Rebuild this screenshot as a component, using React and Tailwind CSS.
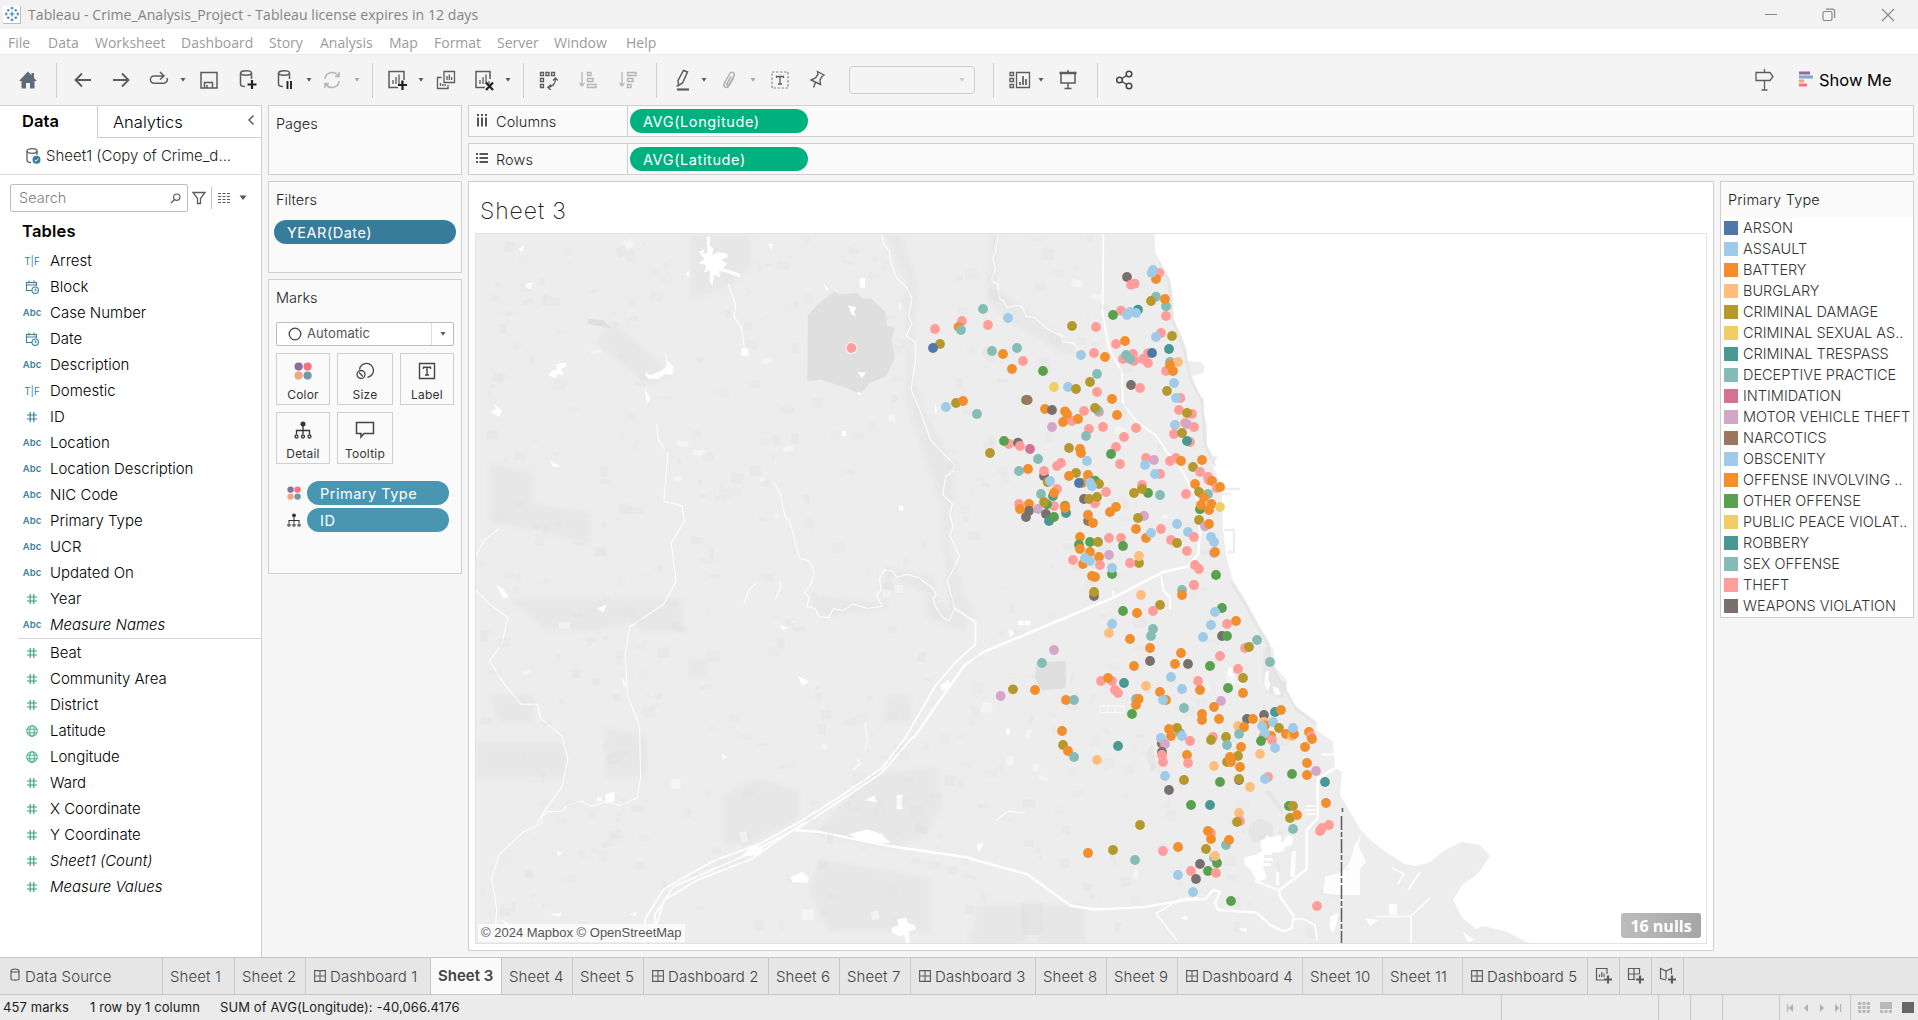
import React from "react";

const PALETTE = {
  a: "#4e79a7", s: "#a0cbe8", b: "#f28e2b", u: "#ffbe7d", d: "#b6992d", c: "#f1ce63", t: "#499894",
  e: "#86bcb6", i: "#d37295", m: "#d4a6c8", n: "#9d7660", o: "#59a14f", h: "#ff9d9a", w: "#79706e",
};

// x,y,category triples, in thirds of a map pixel
const NORTH = `681,111,w 704,131,h 693,134,h 778,99,h 768,117,b 755,98,s 759,90,s 768,170,e 753,183,d 798,199,e 795,177,b 798,228,h
714,209,t 663,212,h 639,225,o 690,216,s 681,225,s 708,219,s 249,207,e 186,243,h 176,261,b 183,270,e 105,267,h 264,255,h 324,234,s 120,312,d 99,324,a
516,258,d 588,261,h 783,279,h 768,291,s 816,288,d 807,327,t 648,312,h 675,303,b 276,333,e 351,324,e 309,342,b 369,363,h 336,387,b 429,393,o
543,345,s 582,339,h 615,351,b 669,357,h 699,342,h 702,363,h 678,345,e 690,357,e 744,340,h 729,357,h 744,369,h 756,339,a 810,366,e 834,366,u 798,393,h 810,375,b 819,393,b
591,402,e 570,426,d 504,441,s 528,447,d 462,441,c 591,456,h 636,477,b 693,435,w 720,444,h 822,429,s 801,453,d 841,474,h 828,474,s
138,501,s 168,489,d 189,483,b 231,522,e 378,480,o 383,480,n 435,507,b 456,510,w 516,543,h 495,514,b 501,522,b 489,546,b 534,537,b 552,513,h 597,516,h 594,511,e 585,504,d 651,525,b
837,510,h 876,522,h 861,519,d 825,555,s 855,549,h 861,552,m 882,561,h 822,582,h 846,579,d 870,606,h 861,603,t
456,561,m 567,567,h 609,561,h 558,588,e 708,564,h 672,591,h 648,621,h 633,642,o 660,672,h
327,612,h 312,603,o 354,608,w 360,618,h 390,627,i 270,639,d 414,657,e 357,693,e 384,687,b 507,624,d 540,627,b 543,639,b 561,663,s
471,678,h 483,669,h 432,708,w 432,693,h 443,726,d 450,723,s 528,699,d 507,708,b 564,705,b 585,722,o 546,729,b 537,729,a 597,732,d 570,728,s 576,739,s
738,654,h 762,660,m 735,675,s 780,702,h 765,702,s 810,663,h 828,654,h 843,663,b 906,660,b 879,681,d
900,696,h 924,711,h 927,721,h 936,723,b 950,744,h 960,741,b 885,732,b 897,756,d 924,762,e 858,762,h 900,808,o 912,772,b 903,795,b 934,792,b 927,810,b 960,801,c
726,735,h 744,759,o 726,747,d 702,759,d 780,765,e 618,756,h 471,747,h 459,768,t 423,762,e 462,759,b 552,777,w 585,790,h 567,777,d 591,771,d
357,792,h 387,792,b 387,812,w 360,807,b 378,831,w 414,807,m 462,798,h 441,793,o 432,786,d 438,822,w 447,843,t 462,831,o 498,819,t 495,797,d 495,804,b
648,801,b 630,816,b 732,828,m 714,834,d 564,843,n 564,825,b 579,849,b 831,852,s 897,840,d 915,859,m 927,852,b 864,876,s 882,891,h
708,867,b 738,894,b 753,879,s 783,867,h 813,900,h 831,909,d 861,933,h 933,891,s 942,906,s 942,939,m 945,936,b
540,891,b 537,914,o 540,927,b 570,906,o 594,906,d 627,894,h 663,894,h 669,918,o 570,936,b 597,951,b 627,945,m 519,960,h 549,972,b 555,954,s 570,963,s 600,975,h
717,969,d 717,948,u 690,969,h 636,1002,o 636,984,s 576,1008,b 585,1011,b 582,1068,w 582,1056,d 885,975,h 897,987,h 948,1005,o 882,1035,h 846,1050,e 846,1065,b 723,1065,u`;

const SOUTH = `420,75,d 522,15,h 309,93,o 351,99,b 399,93,h 276,132,s 267,159,u 330,177,b 399,147,e 393,168,e 606,84,o 585,96,s 573,135,s 621,132,h 648,123,b
549,171,s 606,168,w 621,168,o 711,180,e 675,204,h 687,201,d 750,246,e 102,210,m 66,249,e 390,204,b 390,243,w 342,258,b 483,219,b 465,252,b 504,252,w
570,258,o 600,228,h 654,267,h 669,294,d 453,291,s 243,303,h 276,303,h 264,294,b 312,309,t 285,330,h 294,339,h 378,318,u 420,336,b 438,360,b 429,360,s 486,327,s
534,303,h 540,330,b 624,324,o 669,339,b 603,363,m 582,381,b 492,384,e 348,357,e 356,357,b 348,375,b 336,402,o 45,330,b 138,360,b 162,360,e
546,402,b 546,420,b 597,417,b 765,396,t 783,390,b 732,405,w 681,417,w 699,417,b 732,426,u 735,436,b 759,426,s 726,438,s 732,468,b 753,468,b 735,459,s
654,438,u 672,441,b 657,462,e 723,483,o 756,480,h 777,444,d 798,462,b 816,468,u 822,462,b 819,444,s 765,504,s 867,456,b 873,468,h 876,477,b 855,501,b
480,459,e 471,444,d 447,447,b 453,468,b 486,468,s 510,483,h 579,471,h 573,480,d 618,471,d 621,495,e 663,501,b 720,522,u
425,490,n 423,474,s 435,492,m 426,516,w 426,525,h 429,546,h 501,525,b 504,549,h 126,453,b 129,495,d 144,513,b 162,531,e 231,540,u 294,498,t
582,558,u 621,546,d 654,528,d 630,531,b 633,546,b 660,561,b 657,600,w 657,597,d 744,591,h 735,597,s 690,621,u 600,606,o
435,588,s 447,630,w 492,600,d 861,549,b 888,573,m 861,585,b 816,582,o 915,606,t 918,669,b 513,675,o 570,675,t
360,735,d 657,699,u 660,723,h 651,726,d 807,678,o 819,678,d 810,714,d 831,705,b 819,747,e 927,735,h 906,744,h 900,753,h
573,759,h 564,753,b 573,777,b 618,795,e 627,780,b 279,810,d 204,819,b 345,840,e 429,813,h 474,801,b 558,807,d 582,833,e 591,849,o 585,828,u
540,852,w 513,873,h 564,873,o 588,879,h 528,897,w 474,885,s 519,936,s 633,963,o 891,978,h -21,328,d -58,348,m`;

const parse = (src) => src.trim().split(/\s+/).map((p) => {
  const [x, y, c] = p.split(",");
  return [Number(x) / 3, Number(y) / 3, PALETTE[c]];
});

const MARKS = [
  ...parse(NORTH).map(([x, y, c]) => [x + 900, y + 240, c]),
  ...parse(SOUTH).map(([x, y, c]) => [x + 1020, y + 580, c]),
];

// deterministic scatter of faint land-use parcels
const PARCELS = (() => {
  let seed = 7;
  const rnd = () => ((seed = (seed * 16807) % 2147483647) / 2147483647);
  const out = [];
  for (let k = 0; k < 520; k++) {
    const y = 236 + rnd() * 700;
    const xmax = 1140 + Math.max(0, y - 400) * 0.45;
    out.push([478 + rnd() * (xmax - 478), y, 3 + rnd() * 10, 3 + rnd() * 8, (rnd() - 0.5) * 30, rnd()]);
  }
  return out;
})();

function BaseMap() {
  return (
    <svg viewBox="476 234 1230 709" className="block h-[709px] w-[1230px]" fill="none">
      <defs>
        <filter id="soft" x="-20%" y="-20%" width="140%" height="140%"><feGaussianBlur stdDeviation="5" /></filter>
      </defs>
      <rect x="475" y="233" width="1232" height="711" fill="#fff" />
      <path fill="#ededed" d="M475 233H1155V252L1160 262 1170 280 1173 295 1174 320 1180 332 1187 350 1187 361 1200 362 1205 366 1203 373 1192 376 1198 392 1204 400 1203 410 1207 425 1207 445 1212 455 1218 457 1212 465 1219 480 1222 487 1222 500 1223 530 1226 555 1233 580 1247 603 1260 627 1270 643 1272 663 1280 680 1287 682 1287 693 1297 707 1317 722 1317 730 1333 742 1335 768 1342 772 1340 795 1348 808 1360 829 1368 838 1387 853 1405 864 1416 866 1430 862 1445 850 1462 842 1480 845 1490 856 1478 874 1462 885 1453 900 1462 917 1476 929 1482 926 1505 931 1531 944H475Z" />
      <path stroke="#e2e2e2" strokeWidth="2.500" opacity=".8" d="M1159 262 1169 281 1172 320 1178 334 1185 352 1190 378 1202 402 1205 445 1215 466M1231 582 1245 604 1258 628 1268 645 1271 664 1296 709 1315 723" />
      <g transform="translate(470 230) scale(.4847 .456)">
        <g fill="#dadada" opacity=".3" filter="url(#soft)">
          <path d="M455 10H580V80L540 120 455 155Z" />
          <path d="M40 510 130 530V600L250 620V690L150 660 40 640Z" />
          <path d="M80 810H440V880H350L340 860 260 880 160 880Z" />
          <path d="M15 1125H200V1200H15Z" /><path d="M280 1090 365 1110V1200H280Z" />
          <path d="M520 1240 590 1200 680 1230V1290L590 1340 520 1350Z" />
          <path d="M830 1190 960 1180 975 1260 940 1330 860 1355 710 1320Z" />
          <path d="M720 1380 950 1420V1540H740L700 1450Z" />
          <path d="M860 1020H910V1080H850Z" /><path d="M700 800 850 820 860 740 960 760V800L1000 850 1040 830 1020 880 940 850V800L870 760 860 830 720 850Z" />
          <path d="M860 10H890L925 120 910 300 940 400 1000 520 990 700 1040 850 990 850 970 600 900 380 900 120Z" />
          <path d="M1075 10H1090L1080 120 1140 170 1260 270 1220 270 1100 190 1065 150Z" />
          <path d="M1045 1480H1150V1568H1030Z" /><path d="M1180 1480H1270V1568H1170Z" />
          <path d="M40 1020H130V1080H60Z" /><path d="M450 940H490V980H450Z" />
          <path d="M290 200 360 260 420 320 370 340 260 250Z" />
        </g>
        <path fill="#dfdfdf" d="M697 188 720 160 752 135 760 141 800 138 810 150 828 150 857 180 860 210 877 215 870 240 876 280 858 322 825 335 805 360 780 348 725 328 696 332Z" />
        <path fill="#dfdfdf" d="M1168 948 1229 945V1005L1180 1010 1166 985Z" />
        <path fill="#dfdfdf" d="M243 195 275 198 292 216 243 206Z" />
        <g fill="#fff">
          <path d="M472 48 484 42 480 52 490 50 488 14 496 14 494 34 502 40 500 55 512 48 530 52 532 60 518 66 530 74 522 84 558 96 556 104 528 92 514 90 516 104 504 98 500 122 494 112 496 88 482 94 488 78 472 72 484 64Z" />
          <path d="M780 165 797 170 792 180 797 188 788 186ZM800 312 818 312 808 325ZM798 355 808 357 803 363ZM804 106 815 106V126H804Z" />
          <path d="M162 318 170 308 180 306 178 294 198 291 200 300 188 304 192 318 180 316 176 326ZM358 315 372 318 382 314 402 306 408 288 420 300 418 318 402 316 390 326 368 326Z" />
          <path d="M113 118 130 115 126 130 116 127ZM100 42 112 32 108 48ZM616 30 624 32 622 45ZM42 398 54 392 50 382 66 396 60 410 50 404ZM165 505 185 518 172 520Z" />
          <path d="M560 260H574V275H560ZM55 778 70 790 80 806 68 808ZM262 830 283 820 275 838ZM677 978 699 990 685 1000ZM640 865 655 872 645 877ZM312 980 322 995 318 1003Z" />
          <path d="M279 1237 298 1232V1252L280 1257ZM262 1245H272V1252H262Z" />
          <path d="M782 1325 820 1314 850 1325 868 1345 810 1342ZM880 1240 892 1238V1270H880ZM815 1250 835 1240 838 1255Z" />
          <path d="M870 1530 884 1524 880 1512 900 1508 904 1520 918 1524 920 1534 905 1538 908 1568H902L896 1546 884 1548 870 1540ZM660 1420 685 1408 700 1420 695 1432 665 1430ZM1045 1350 1060 1342 1050 1365Z" />
          <path d="M1131 857H1142V867H1131ZM1145 857H1156V867H1145ZM1112 875 1124 882 1114 892ZM1106 1093H1114V1106H1106ZM767 441H776V451H767ZM885 605H894V615H885Z" />
          <path d="M520 1150 530 1155 522 1162ZM180 1362 190 1365 182 1372ZM165 1500 190 1498 185 1505ZM60 1510 85 1525 90 1540ZM970 1000 988 985 990 1000 975 1012ZM580 1350 605 1352 600 1370 560 1375Z" />
          <path d="M360 345 372 370 365 380ZM445 95 452 90V105ZM730 118 740 130 735 134ZM885 160 890 162 888 180ZM330 1500 345 1495 342 1505ZM960 380 964 400 958 400Z" />
        </g>
        <g stroke="#fff" strokeWidth="1.100" strokeLinejoin="round" opacity=".9">
          <path vectorEffect="non-scaling-stroke" d="M850 10 852 30 865 45 868 70 880 105 900 125 912 150 905 190 912 205 900 232 918 245 920 280 910 350 930 400 950 460 985 500 1000 515 996 530 982 540 975 580 995 600 990 625 997 650 990 670 1010 715 985 770 1000 830 988 858 975 850 960 825 955 808 962 800 955 785 925 762 900 755 880 762 872 748 855 745 845 765 848 790 838 800 850 825 820 830 790 820 770 835 750 830 740 850 720 848 712 830 695 825 700 805 690 795 705 775 710 750 700 725 680 720 660 640 650 628 640 580 628 555" />
          <path vectorEffect="non-scaling-stroke" d="M1090 10 1084 50 1078 62 1084 85 1076 110 1090 120 1092 150 1100 155 1108 170 1130 165 1140 170 1148 190 1165 192 1185 212 1205 225 1222 232 1220 245 1245 248 1260 270" />
          <path vectorEffect="non-scaling-stroke" d="M533 118 548 165 545 190 560 215 567 265M404 270 408 300 375 325 362 310" />
          <path vectorEffect="non-scaling-stroke" d="M385 425 388 460 408 490 400 595 438 605 442 640 415 685 425 770 400 820 330 870 320 930 325 1020 350 1090 352 1200 345 1245 330 1252 310 1262 280 1254 250 1264 230 1252 200 1262 190 1274 160 1276 145 1290 150 1300 110 1320 60 1370 45 1420 55 1490 50 1568" />
          <path vectorEffect="non-scaling-stroke" d="M12 715 30 680 60 655M12 790 40 820 78 850 65 910 40 945 70 995 105 1040 140 1040 145 1070 190 1110 202 1160 190 1220 150 1280 140 1300" />
          <path vectorEffect="non-scaling-stroke" d="M565 820 575 790 590 775M630 810 640 785 640 770M815 1080 820 1120 815 1140M1085 1295 1110 1275 1145 1278M800 1160 805 1170 790 1185" />
        </g>
        <g stroke="#fff" strokeWidth="1.700" strokeLinejoin="round">
          <path vectorEffect="non-scaling-stroke" d="M358 1568 362 1510 400 1445 500 1385 600 1345 680 1298 760 1245 850 1180 900 1110 960 1000 1000 950 1043 908V860L1000 830" />
          <path vectorEffect="non-scaling-stroke" d="M378 1568 382 1500 420 1440 560 1375 680 1310 780 1240 850 1190 915 1110M372 1568 400 1470 470 1425 580 1380 640 1335 690 1300" />
          <path vectorEffect="non-scaling-stroke" d="M915 1115 970 1030 1020 955 1060 925 1330 805 1430 750 1480 738 1502 712 1506 670 1506 620" strokeWidth="2.400" />
          <path vectorEffect="non-scaling-stroke" d="M670 1316 720 1320 860 1350 1020 1375 1150 1413 1200 1452 1240 1482 1290 1490 1390 1485 1500 1465" strokeWidth="2.400" />
          <path vectorEffect="non-scaling-stroke" d="M1307 10 1305 180 1318 260 1345 310 1347 380 1375 420 1415 450 1440 490 1465 520 1505 600" />
          <path vectorEffect="non-scaling-stroke" d="M1426 757 1430 790 1444 808V830M1327 805V790" strokeWidth="1.400" />
        </g>
      </g>
      <g>
        {PARCELS.map(([x, y, w, h, r, t], k) => (
          <rect key={k} x={x} y={y} width={w} height={h} fill={t > 0.94 ? "#f6f6f6" : "#dcdcdc"} opacity={t > 0.94 ? 0.7 : 0.12 + t * 0.18} transform={`rotate(${r} ${x} ${y})`} />
        ))}
      </g>
      <g transform="translate(1020 580) scale(.3333)">
        <g fill="#dfdfdf" opacity=".5">
          <path d="M690 730 720 715 760 735V770L700 790 685 760ZM735 635 750 632 792 690 788 705ZM5 970H70V1065H5Z" />
          <path d="M380 520 395 490 410 560 395 580ZM730 205 760 200 765 260 800 300 790 355 740 340 728 300Z" />
        </g>
        <g fill="#fff">
          <path d="M722 780 735 778 740 765 752 772 782 764 785 790 805 765 820 770 815 795 795 800 790 812 775 818H755V824H732V834H758V842H730V850H752V858H728L740 895 712 908 692 868 674 855 673 832 705 824 728 812 722 800Z" />
          <path d="M815 815 828 812 825 890 810 890ZM768 875H777V915H768ZM735 275 748 272 745 300 752 312 742 335 733 315ZM757 318 775 325 782 342 765 345ZM905 520H945V527H905ZM915 890 1020 860V945H950L910 940Z" opacity=".85" />
          <path d="M620 280 628 262 640 265 636 280 648 286 628 290ZM480 1015 500 1005 502 1020ZM655 1045H680V1058ZM930 1010 955 1000 950 1030 938 1060 930 1040Z" opacity=".9" />
        </g>
        <g stroke="#fff" strokeLinejoin="round" strokeLinecap="round" strokeWidth="7">
          <path d="M480 958H555L580 930 600 935 585 970 595 990 710 998 750 1035 790 1054 815 1045 822 1010 780 950 778 930 860 868V750L893 715V595L945 565" />
          <path d="M705 903 778 932M822 1020 845 1015 885 1035 892 1080" strokeWidth="5" />
          <path d="M480 958 408 1000 470 1080M1020 770 1005 830 960 890M855 690H885M858 702H885M862 678H885" strokeWidth="4" />
          <path d="M240 378H312V398H240ZM262 380V396M285 380V396" strokeWidth="4" opacity=".6" />
        </g>
        <path d="M425 0 430 30 450 50V88" stroke="#fff" strokeWidth="5" />
      </g>
      <g fill="#fff">
        <path d="M1389 904H1397V915H1389ZM1365 918 1378 920 1370 926ZM1462 931 1475 940 1468 942ZM1356 840 1366 862 1350 880 1348 868Z" opacity=".85" />
        <path d="M1376 916.500H1411V944M1411 916 1430 898M1392 868 1404 874 1398 884M1420 872 1408 890" fill="none" stroke="#fff" strokeWidth="1.600" />
      </g>
      <path d="M1342.500 808V812M1341.500 816V943" stroke="#5e5e5e" strokeWidth="1.500" strokeDasharray="14 2 5 2" />
      <path d="M1222 489H1240M1222 494H1231M1224 530H1234V552H1228" stroke="#ededed" strokeWidth="2.500" />
      <circle cx="851.5" cy="348" r="6" fill="#fff" opacity=".8" />
      <circle cx="851.5" cy="348" r="4.900" fill="#ff9d9a" />
      {MARKS.map(([x, y, c], k) => (
        <circle key={k} cx={x} cy={y} r="4.900" fill={c} />
      ))}
    </svg>
  );
}

const Svg = ({ w = 20, h = 20, className = "", children, ...p }) => (
  <svg width={w} height={h} viewBox={`0 0 ${w} ${h}`} fill="none" stroke="#5c5c5c" strokeWidth="1.500" className={`block shrink-0 ${className}`} {...p}>{children}</svg>
);
const Caret = ({ className = "", color = "#5c5c5c" }) => (
  <Svg w={8} h={6} className={className} stroke="none"><path d="M1.500 1H6.500L4 4.800Z" fill={color} /></Svg>
);
const Sep = ({ className }) => <div className={`h-[35px] w-px shrink-0 bg-[#cfcfcf] ${className}`} />;
const Bars = () => <path d="M6 15V11M9 15V8M12 15V5.500M15 15V12" strokeWidth="1.300" />;
const FourDots = ({ s = 18, className = "" }) => (
  <svg width={s} height={s} viewBox="0 0 18 18" className={className}>
    <circle cx="4.600" cy="4.600" r="4.100" fill="#8b6f9b" /><circle cx="13.600" cy="4.600" r="4.100" fill="#f9707f" />
    <circle cx="4.600" cy="13.600" r="4.100" fill="#f3a77c" /><circle cx="13.600" cy="13.600" r="4.100" fill="#6d9aa6" />
  </svg>
);
const DetailIcon = ({ s = 18 }) => (
  <svg width={s} height={s} viewBox="0 0 18 18" fill="none" stroke="#333" strokeWidth="1.300">
    <circle cx="9" cy="3" r="2.500" fill="#333" stroke="none" /><path d="M9 4V13M2.500 13V9.500H15.500V13" />
    <circle cx="2.500" cy="15.500" r="1.500" /><circle cx="9" cy="15.500" r="1.500" /><circle cx="15.500" cy="15.500" r="1.500" />
  </svg>
);

function Toolbar() {
  return (
    <div className="flex h-[51px] shrink-0 items-center border-t border-[#ebebeb] bg-[#f4f4f4] pl-[18px] pr-[28px]">
      <Svg stroke="none"><path d="M10 1.500 1 11H3.500V18.500H8V13H12V18.500H16.500V11H19L16 8V3H13.500V5.200Z" fill="#5f6b7a" /></Svg>
      <Sep className="ml-[18px]" />
      <Svg className="ml-4" strokeWidth="1.800"><path d="M18 10H3M9 3.500 2.500 10 9 16.500" /></Svg>
      <Svg className="ml-[18px]" strokeWidth="1.800"><path d="M2 10H17M11 3.500 17.500 10 11 16.500" /></Svg>
      <Svg className="ml-[18px]"><path d="M15 6H5A3.600 3.600 0 0 0 5 13.200H15A3.600 3.600 0 0 0 18 8M11 2 15 6 11 9.500" /></Svg>
      <Caret className="ml-2.5" />
      <Svg className="ml-3"><path d="M2 2.500H18V18H2ZM5.500 18V12.500H13.500V18M8 15V18" /></Svg>
      <Svg className="ml-[19px]" h={22}><ellipse cx="8" cy="4" rx="5.500" ry="2.200" /><path d="M2.500 4V15C2.500 17 5 17.500 7 17.500M13.500 4V10" /><path d="M14 11V20M9.500 15.500H18.500" strokeWidth="2.200" stroke="#222" /></Svg>
      <Svg className="ml-[18px]" h={22}><ellipse cx="8" cy="4" rx="5.500" ry="2.200" /><path d="M2.500 4V15C2.500 17 5 17.500 7 17.500M13.500 4V10" /><path d="M11.500 12V20M15 12V20" strokeWidth="1.900" stroke="#222" /></Svg>
      <Caret className="ml-[9px]" />
      <Svg className="ml-[9px]" stroke="#b5b5b5"><path d="M3 9A7 7 0 0 1 16 6M17 11A7 7 0 0 1 4 14M17 2V6.500H13M3 18V13.500H7" /></Svg>
      <Caret className="ml-[11px]" color="#aaa" />
      <Sep className="ml-[11px]" />
      <Svg className="ml-3.5" h={22}><path d="M11 18.500H2V2.500H17V11" /><Bars /><path d="M15.500 11.500V21M11 16H20" strokeWidth="2.200" stroke="#222" /></Svg>
      <Caret className="ml-2.5" />
      <Svg className="ml-[11px]"><path d="M8 1.500H18.500V12.500H8ZM5.500 7.500H1.500V18.500H12V15M11 10V6M13.300 10V4.500M15.600 10V7M4.500 16V13M6.800 16V14M9 16V14" strokeWidth="1.300" /></Svg>
      <Svg className="ml-[18px]" h={22}><path d="M11 18.500H2V2.500H16V10" /><Bars /><path d="M12 13.500 19 21M19 13.500 12 21" strokeWidth="2.200" stroke="#222" /></Svg>
      <Caret className="ml-2.5" />
      <Sep className="ml-[11px]" />
      <Svg className="ml-3.5" strokeWidth="1.300"><path d="M2.500 2.500H5.500V5.500H2.500ZM8 2.500H11V5.500H8ZM13.500 2.500H16.500V5.500H13.500ZM2.500 8.500H5.500V11.500H2.500ZM2.500 14.500H5.500V17.500H2.500ZM17.500 8.500C17.500 13.500 15 16.500 10 17.500M15 10.500 17.500 8 20 10.500M13 14.500 9.800 17.500 13 20" /></Svg>
      <Svg className="ml-5" stroke="#b5b5b5"><path d="M4 2V16M1.500 13 4 16 6.500 13M9.500 2.500H13V5.500H9.500ZM9.500 8.500H15V11.500H9.500ZM9.500 14.500H18V17.500H9.500Z" strokeWidth="1.300" /></Svg>
      <Svg className="ml-5" stroke="#b5b5b5"><path d="M4 2V16M1.500 13 4 16 6.500 13M9.500 2.500H18V5.500H9.500ZM9.500 8.500H15V11.500H9.500ZM9.500 14.500H13V17.500H9.500Z" strokeWidth="1.300" /></Svg>
      <Sep className="ml-[18px]" />
      <Svg className="ml-4" h={24}><path d="M10.500 2.500 14.500 4 9.500 15 5.500 17.500 5 12.500Z" /><path d="M4 21.500H16" strokeWidth="2.200" /><path d="M3.500 18H5" /></Svg>
      <Caret className="ml-[7px]" />
      <Svg className="ml-[11px]" stroke="#b0b0b0"><path d="M14.500 8 10 15.500C8 19 3.500 17 5.500 13L10.500 4C12 1 16.500 2.500 15 6L10 14.500C9 16 7 15 8 13.500L12 6.500" /></Svg>
      <Caret className="ml-2.5" color="#aaa" />
      <Svg className="ml-[13px]"><path d="M2 2H18V18H2Z" strokeDasharray="2.500 1.500" stroke="#8a8a8a" strokeWidth="1.200" /><path d="M6.500 8V6.500H13.500V8M10 6.500V14M8 14H12" strokeWidth="1.300" /></Svg>
      <Svg className="ml-[17px]"><path d="M10.500 1.500 17 5 15 6.500 13 10 13.500 14.500 4 10 8.500 8 11 4.500ZM8.500 12.500 6.500 17.500" strokeWidth="1.400" /></Svg>
      <div className="ml-[22px] flex h-7 w-[126px] shrink-0 items-center justify-end rounded-sm border border-[#cfcfcf] pr-2"><Caret color="#ccc" /></div>
      <Sep className="ml-[18px]" />
      <Svg className="ml-[15px]" w={22}><path d="M1 2.500H4.500V5.500H1ZM1 8.500H4.500V11.500H1ZM1 14.500H4.500V17.500H1ZM7.500 2.500H20.500V17.500H7.500Z" strokeWidth="1.300" /><path d="M11 15V12M14 15V6M17 15V9" strokeWidth="1.700" /></Svg>
      <Caret className="ml-1.5" />
      <Svg className="ml-[13px]"><path d="M1.500 3H18.500" strokeWidth="2.500" /><path d="M3 4V13H17V4M10 13V18M6.500 18.500H13.500M10 0V3" /></Svg>
      <Sep className="ml-[19px]" />
      <Svg className="ml-[17px]" stroke="#444"><circle cx="4.500" cy="10" r="2.800" /><circle cx="14" cy="4" r="2.800" /><circle cx="14" cy="16" r="2.800" /><path d="M7 8.500 11.500 5.500M7 11.500 11.500 14.500" /></Svg>
      <Svg className="ml-auto" h={24}><path d="M10.500 1V4M10.500 13V22M7.500 22H13.500M2 4.500H16L19 8.500 16 12.500H2Z" strokeWidth="1.300" /></Svg>
      <Svg className="ml-[24px]" w={16} h={22} stroke="none"><path d="M1 2.500H12V5.500H1Z" fill="#8b6f9b" /><path d="M1 6.500H15V9.500H1Z" fill="#85a3cb" /><path d="M1 10.500H6V13.500H1Z" fill="#f3a77c" /><path d="M1 14.500H9V17.500H1Z" fill="#f9707f" /></Svg>
      <div className="ml-[5px] w-[71px] whitespace-nowrap text-[16.500px] text-black">Show Me</div>
    </div>
  );
}

const HashIcon = ({ green }) => (
  <Svg w={12} h={12} stroke={green ? "#35a37c" : "#3b7f9f"} strokeWidth="1.200"><path d="M4.200 1V11M7.800 1V11M1 4H11M1 8H11" /></Svg>
);
const ICONS = {
  abc: <span className="text-[9.500px] font-semibold text-[#41819f]">Abc</span>,
  tf: <span className="text-[10px] text-[#3b7f9f]">T|F</span>,
  date: <Svg w={14} h={14} stroke="#3b7f9f" strokeWidth="1.100"><path d="M7 10.500H1.500V2.500H11.500V6M1.500 5H11.500M4 .5V3.500M9 .5V3.500" /><circle cx="10.200" cy="10.200" r="3.200" /><path d="M10.200 8.500V10.300H11.800" /></Svg>,
  num: <HashIcon />,
  gnum: <HashIcon green />,
  geo: <Svg w={12} h={12} stroke="#4bb08c" strokeWidth="1.100"><circle cx="6" cy="6" r="5.200" /><ellipse cx="6" cy="6" rx="2.300" ry="5.200" /><path d="M1 4.200H11M1 7.800H11" /></Svg>,
};
const DIMS = [["tf", "Arrest"], ["date", "Block"], ["abc", "Case Number"], ["date", "Date"], ["abc", "Description"], ["tf", "Domestic"], ["num", "ID"], ["abc", "Location"], ["abc", "Location Description"], ["abc", "NIC Code"], ["abc", "Primary Type"], ["abc", "UCR"], ["abc", "Updated On"], ["gnum", "Year"], ["abc", "Measure Names", true]];
const MEAS = [["gnum", "Beat"], ["gnum", "Community Area"], ["gnum", "District"], ["geo", "Latitude"], ["geo", "Longitude"], ["gnum", "Ward"], ["gnum", "X Coordinate"], ["gnum", "Y Coordinate"], ["gnum", "Sheet1 (Count)", true], ["gnum", "Measure Values", true]];

const Field = ({ icon, label, italic }) => (
  <div className="flex h-[26px] items-center">
    <div className="ml-[23px] flex w-[18px] justify-center">{ICONS[icon]}</div>
    <div className={`ml-[9px] whitespace-nowrap text-[15px] font-light text-black ${italic ? "italic" : ""}`}>{label}</div>
  </div>
);

function DataPane() {
  return (
    <div className="flex w-[262px] shrink-0 flex-col border-r border-[#cfcfcf] bg-white">
      <div className="flex h-[33px] shrink-0">
        <div className="w-[97px] border-t border-[#cfcfcf] pl-[22px] text-[16.500px] font-semibold leading-[30px] tracking-[0.1px] text-black">Data</div>
        <div className="flex flex-1 items-center justify-between border border-r-0 border-[#cfcfcf] pl-[15px] pr-[6px] text-[16.500px] text-black">
          <span className="mt-0.5 font-light">Analytics</span>
          <Svg w={8} h={12} className="mb-1"><path d="M6.500 1.500 2 6 6.500 10.500" /></Svg>
        </div>
      </div>
      <div className="flex h-[37px] shrink-0 items-center border-b border-[#dcdcdc] pl-[25px] text-[15px] text-[#222]">
        <Svg w={17} h={18} strokeWidth="1.300"><ellipse cx="7" cy="4" rx="5" ry="2.300" /><path d="M2 4V13C2 15 4 15.500 6 15.500M12 4V8" /><circle cx="11.500" cy="12.800" r="4" fill="#3b7f9f" stroke="none" /><path d="M9.800 13 11 14.200 13.300 11.600" stroke="#fff" strokeWidth="1" /></Svg>
        <span className="ml-1 whitespace-nowrap font-light">Sheet1 (Copy of Crime_d...</span>
      </div>
      <div className="mt-[9px] flex h-7 shrink-0 items-center pl-[10px]">
        <div className="flex h-7 w-[178px] items-center justify-between rounded-[2px] border border-[#bdbdbd] pl-2 pr-[6px] text-[14.500px] font-light text-[#808080]">
          Search
          <Svg w={11} h={11} strokeWidth="1.200"><circle cx="6.800" cy="4.200" r="3.200" /><path d="M4.500 6.500 1 10" /></Svg>
        </div>
        <Svg w={14} h={14} className="ml-[4px]" strokeWidth="1.300"><path d="M1 1.500H13L8.500 7.500V12.500H5.500V7.500Z" /></Svg>
        <div className="ml-[5px] h-[22px] w-px bg-[#c4c4c4]" />
        <Svg w={14} h={12} className="ml-[5px]" strokeWidth="1.200"><path d="M1 1.500H4M5.500 1.500H8.500M10 1.500H13M1 4.500H4M5.500 4.500H8.500M10 4.500H13M1 7.500H4M5.500 7.500H8.500M10 7.500H13M1 10.500H4M5.500 10.500H8.500M10 10.500H13" /></Svg>
        <svg width="8" height="6" viewBox="0 0 8 6" className="ml-2"><path d="M.5.500H7.500L4 5Z" fill="#555" /></svg>
      </div>
      <div className="mt-2 h-[28px] shrink-0 pl-[22px] text-[16.500px] font-semibold leading-[22px] tracking-[0.2px] text-black">Tables</div>
      <div>{DIMS.map(([i, l, it]) => <Field key={l} icon={i} label={l} italic={it} />)}</div>
      <div className="ml-[18px] h-px shrink-0 bg-[#d4d4d4]" />
      <div className="mt-px">{MEAS.map(([i, l, it]) => <Field key={l} icon={i} label={l} italic={it} />)}</div>
    </div>
  );
}

const MarkButton = ({ label, icon, wide }) => (
  <div className={`flex h-[52px] flex-col items-center border border-[#cfcfcf] pt-[8px] ${wide ? "w-[56px]" : "w-[54px]"}`}>
    <div className="flex h-[18px] items-center">{icon}</div>
    <div className="mt-[7px] text-[12px] leading-[16px] tracking-[0.2px] text-[#333]">{label}</div>
  </div>
);
const card = "border border-[#cfcfcf] bg-[#fafafa]";

function Cards() {
  return (
    <div className="ml-[6px] flex w-[194px] shrink-0 flex-col gap-[6px] text-[14.500px] text-[#222]">
      <div className={`${card} h-[70px] pl-[7px] pt-[8px] font-light leading-[20px]`}>Pages</div>
      <div className={`${card} h-[92px] pl-[5px] pt-[8px]`}>
        <div className="pl-[2px] font-light leading-[20px]">Filters</div>
        <div className="mt-[10px] h-6 w-[182px] rounded-full bg-[#387c9b] pl-[13px] leading-[25px] tracking-[0.5px] text-white">YEAR(Date)</div>
      </div>
      <div className={`${card} h-[295px] pl-[7px] pt-[8px]`}>
        <div className="font-light leading-[20px]">Marks</div>
        <div className="mt-[14px] flex h-6 w-[178px] items-center rounded-[2px] border border-[#bdbdbd] bg-white text-[13px] tracking-[0.1px] text-[#555]">
          <Svg w={14} h={14} className="ml-[11px]" stroke="#444" strokeWidth="1.300"><circle cx="7" cy="7" r="5.800" /></Svg>
          <span className="ml-[5px]">Automatic</span>
          <div className="ml-auto flex h-full w-[22px] items-center justify-center border-l border-[#dcdcdc]"><Caret /></div>
        </div>
        <div className="mt-[7px] flex gap-[7px]">
          <MarkButton label="Color" icon={<FourDots />} />
          <MarkButton wide label="Size" icon={<Svg w={18} h={18} stroke="#444" strokeWidth="1.300"><path d="M3.500 7.500A7 7 0 1 1 11.500 15.300" /><circle cx="5" cy="12.500" r="4" /><path d="M3 10.500 7 14.500" /></Svg>} />
          <MarkButton label="Label" icon={<Svg w={18} h={18} stroke="#444"><path d="M1.500 1.500H16.500V16.500H1.500ZM5.500 7V5.200H12.500V7M9 5.200V13M7 13H11" strokeWidth="1.400" /></Svg>} />
        </div>
        <div className="mt-[7px] flex gap-[7px]">
          <MarkButton label="Detail" icon={<DetailIcon />} />
          <MarkButton wide label="Tooltip" icon={<Svg w={20} h={18} stroke="#444"><path d="M1.500 1.500H18.500V12.500H9L6 16V12.500H1.500Z" /></Svg>} />
        </div>
        <div className="mt-[17px] flex items-center pl-[11px] text-white">
          <FourDots s={14} /><div className="ml-[6px] h-6 w-[142px] rounded-full bg-[#4996b2] pl-[13px] leading-[25px] tracking-[0.5px]">Primary Type</div>
        </div>
        <div className="mt-[3px] flex items-center pl-[11px] text-white">
          <DetailIcon s={14} /><div className="ml-[6px] h-6 w-[142px] rounded-full bg-[#4996b2] pl-[13px] leading-[25px] tracking-[0.5px]">ID</div>
        </div>
      </div>
    </div>
  );
}

const Shelf = ({ icon, label, pill }) => (
  <div className={`${card} flex h-8 text-[14.500px] text-[#222]`}>
    <div className="flex w-[159px] items-center border-r border-[#cfcfcf] pl-[7px]">{icon}<span className="ml-2 mt-px font-light tracking-[0.1px]">{label}</span></div>
    <div className="ml-[2px] mt-[3px] h-6 w-[178px] rounded-full bg-[#00b180] pl-[13px] leading-[26px] tracking-[0.6px] text-white">{pill}</div>
  </div>
);

const LEGEND = [["#4e79a7", "ARSON"], ["#a0cbe8", "ASSAULT"], ["#f28e2b", "BATTERY"], ["#ffbe7d", "BURGLARY"], ["#b6992d", "CRIMINAL DAMAGE"], ["#f1ce63", "CRIMINAL SEXUAL AS.."], ["#499894", "CRIMINAL TRESPASS"], ["#86bcb6", "DECEPTIVE PRACTICE"], ["#d37295", "INTIMIDATION"], ["#d4a6c8", "MOTOR VEHICLE THEFT"], ["#9d7660", "NARCOTICS"], ["#a0cbe8", "OBSCENITY"], ["#f28e2b", "OFFENSE INVOLVING .."], ["#59a14f", "OTHER OFFENSE"], ["#f1ce63", "PUBLIC PEACE VIOLAT.."], ["#499894", "ROBBERY"], ["#86bcb6", "SEX OFFENSE"], ["#ff9d9a", "THEFT"], ["#79706e", "WEAPONS VIOLATION"]];

const DashIcon = () => <Svg w={12} h={12} strokeWidth="1.100"><path d="M.6.600H11.400V11.400H.6ZM6 .6V11.400M.6 6H11.400" /></Svg>;
const TABS = [["Sheet 1", "w-[72px]"], ["Sheet 2", "w-[71px]"], ["Dashboard 1", "w-[125px]"], ["Sheet 3", "w-[71px]"], ["Sheet 4", "w-[71px]"], ["Sheet 5", "w-[71px]"], ["Dashboard 2", "w-[125px]"], ["Sheet 6", "w-[71px]"], ["Sheet 7", "w-[71px]"], ["Dashboard 3", "w-[125px]"], ["Sheet 8", "w-[71px]"], ["Sheet 9", "w-[71px]"], ["Dashboard 4", "w-[125px]"], ["Sheet 10", "w-[80px]"], ["Sheet 11", "w-[80px]"], ["Dashboard 5", "w-[125px]"]];
const NEW_TABS = [
  <path key="s" d="M9 13H1.500V1.500H12V7M4.500 10V7.500M6.800 10V5M9 10V6.500" />,
  <path key="d" d="M8 12.500H1.500V1.500H12.500V7M7 1.500V12M1.500 7H12.500" />,
  <path key="b" d="M7 13 1.500 11.500V1.500L7 4 12.500 1.500V7M7 4V12" />,
];

function BottomBars() {
  return (
    <>
      <div className="flex h-[38px] shrink-0 border-y border-[#c6c6c6] bg-[#e6e6e6] text-[15px] text-[#444]">
        <div className="flex w-[163px] items-center border-r border-[#c6c6c6] pl-[10px]">
          <Svg w={10} h={13} className="mb-[3px]" strokeWidth="1.200"><path d="M1 3V11C1 12.500 9 12.500 9 11V3C9 .3 1 .3 1 3C1 4.500 9 4.500 9 3" /></Svg>
          <span className="ml-[5px] mt-[3px] font-light tracking-[0.1px]">Data Source</span>
        </div>
        {TABS.map(([label, w]) => {
          const dash = label.startsWith("Dash");
          const active = label === "Sheet 3";
          return (
            <div key={label} className={`flex shrink-0 items-center whitespace-nowrap border-r border-[#c6c6c6] ${w} ${dash ? "pl-2" : "pl-[7px]"} ${active ? "bg-[#fafafa] font-semibold text-[#444]" : "font-light"}`}>
              {dash && <span className="mr-1"><DashIcon /></span>}
              <span className={active ? "" : "mt-[3px] tracking-[0.1px]"}>{label}</span>
            </div>
          );
        })}
        {NEW_TABS.map((p, k) => (
          <div key={k} className="flex w-8 items-center justify-center border-r border-[#c6c6c6]">
            <Svg w={18} h={18} strokeWidth="1.200">{p}<path d="M13 8.500V16.500M9 12.500H17" strokeWidth="2.200" /></Svg>
          </div>
        ))}
      </div>
      <div className="flex h-[25px] shrink-0 items-center bg-[#ebebeb] pl-[3px] text-[13px] tracking-[0.1px] text-[#222]">
        <span className="w-[87px]">457 marks</span>
        <span className="w-[130px]">1 row by 1 column</span>
        <span>SUM of AVG(Longitude): -40,066.4176</span>
        <div className="ml-auto flex h-full items-center">
          <div className="h-full w-[157px] border-l border-[#c9c9c9]" />
          <div className="h-full w-8 border-l border-[#c9c9c9]" />
          <div className="h-full w-8 border-l border-[#c9c9c9]" />
          <div className="h-full w-[57px] border-l border-[#c9c9c9]" />
          <div className="flex h-full w-[71px] items-center gap-[8px] border-l border-[#c9c9c9] pl-[6px]">
            {["M1 0H2.200V8H1ZM7 0V8L2.500 4Z", "M6 0V8L2 4Z", "M2 0V8L6 4Z", "M6 0H7.200V8H6ZM1 0V8L5.500 4Z"].map((d) => (
              <svg key={d} width="8" height="8" viewBox="0 0 8 8"><path d={d} fill="#b3b3b3" /></svg>
            ))}
          </div>
          <div className="flex h-full w-[68px] items-center gap-[10px] border-l border-[#c9c9c9] pl-[7px]">
            <svg width="12" height="11" viewBox="0 0 12 11"><path d="M0 0H3.200V3H0ZM4.400 0H7.600V3H4.400ZM8.800 0H12V3H8.800ZM0 4H3.200V7H0ZM4.400 4H7.600V7H4.400ZM8.800 4H12V7H8.800ZM0 8H3.200V11H0ZM4.400 8H7.600V11H4.400ZM8.800 8H12V11H8.800Z" fill="#b9b9b9" /></svg>
            <svg width="12" height="11" viewBox="0 0 12 11"><path d="M0 0H12V7H0ZM0 8H3.200V11H0ZM4.400 8H7.600V11H4.400ZM8.800 8H12V11H8.800Z" fill="#b9b9b9" /></svg>
            <div className="h-[11px] w-[12px] bg-[#666]" />
          </div>
        </div>
      </div>
    </>
  );
}

const MENU = [["File", "w-10"], ["Data", "w-[47px]"], ["Worksheet", "w-[86px]"], ["Dashboard", "w-[88px]"], ["Story", "w-[51px]"], ["Analysis", "w-[69px]"], ["Map", "w-[45px]"], ["Format", "w-[63px]"], ["Server", "w-[57px]"], ["Window", "w-[72px]"], ["Help", "w-10"]];

export default function App() {
  return (
    <div className="flex h-[1020px] w-[1918px] flex-col overflow-hidden bg-[#f5f5f5] font-['Inter',sans-serif]">
      <div className="flex h-[29px] shrink-0 items-center bg-[#f2f2f2] pl-[3px] font-['Open_Sans',sans-serif] text-[14px] text-[#848484]">
        <div className="flex h-[18px] w-[18px] items-center justify-center border-b border-r border-[#bbb] bg-white">
          <svg width="16" height="16" viewBox="0 0 16 16" stroke="#3c86b4" strokeWidth="1.200"><path d="M8 5.500V10.500M5.500 8H10.500M8 .8V3.600M6.600 2.200H9.400M8 12.400V15.200M6.600 13.800H9.400M.8 8H3.600M2.200 6.600V9.400M12.400 8H15.200M13.800 6.600V9.400M4.200 3V5.600M2.900 4.300H5.500M11.800 3V5.600M10.500 4.300H13.100M4.200 10.400V13M2.900 11.700H5.500M11.800 10.400V13M10.500 11.700H13.100" /></svg>
        </div>
        <span className="ml-[7px] whitespace-nowrap tracking-[0.07px]">Tableau - Crime_Analysis_Project - Tableau license expires in 12 days</span>
        <div className="ml-auto flex items-center pr-[23px]">
          <Svg w={12} h={12} stroke="#888" strokeWidth="1"><path d="M0 5.500H12" /></Svg>
          <Svg w={14} h={14} className="ml-[45px]" stroke="#888" strokeWidth="1.200"><rect x="1" y="3.500" width="9" height="9" rx="1.500" /><path d="M4 1.200H10.500A2 2 0 0 1 12.600 3.200V10" /></Svg>
          <Svg w={14} h={14} className="ml-[45px]" stroke="#888" strokeWidth="1.200"><path d="M1 1 13 13M13 1 1 13" /></Svg>
        </div>
      </div>
      <div className="flex h-[25px] shrink-0 items-center bg-white pl-2 pt-px font-['Open_Sans',sans-serif] text-[14px] text-[#9b9b9b]">
        {MENU.map(([m, w]) => <span key={m} className={`shrink-0 ${w}`}>{m}</span>)}
      </div>
      <Toolbar />
      <div className="flex h-[852px] shrink-0">
        <DataPane />
        <Cards />
        <div className="ml-[6px] flex w-[1446px] shrink-0 flex-col gap-[6px]">
          <Shelf label="Columns" pill="AVG(Longitude)" icon={<Svg w={12} h={14} stroke="none"><path d="M1 0H3V2H1ZM5 0H7V2H5ZM9 0H11V2H9ZM1 3.500H3V12.500H1ZM5 3.500H7V12.500H5ZM9 3.500H11V12.500H9Z" fill="#555" /></Svg>} />
          <Shelf label="Rows" pill="AVG(Latitude)" icon={<Svg w={12} h={12} stroke="none" className="mb-0.5"><path d="M0 1H2V3H0ZM0 5H2V7H0ZM0 9H2V11H0ZM3.500 1H12V3H3.500ZM3.500 5H12V7H3.500ZM3.500 9H12V11H3.500Z" fill="#555" /></Svg>} />
          <div className="flex items-start gap-[6px]">
            <div className="h-[770px] w-[1246px] border border-[#cfcfcf] bg-white pl-[6px]">
              <div className="h-[51px] pl-[5px] pt-[11px] text-[23px] font-extralight leading-[36px] tracking-[0.9px] text-[#222]">Sheet 3</div>
              <div className="relative h-[711px] w-[1232px] border border-[#e2e2e2]">
                <BaseMap />
                <div className="absolute bottom-px left-[2px] h-[18px] bg-white/70 px-[3px] font-['Liberation_Sans',sans-serif] text-[13px] leading-[18px] text-[#555]">© 2024 Mapbox © OpenStreetMap</div>
                <div className="absolute bottom-[5px] right-[5px] flex h-[25px] w-[80px] items-center justify-center rounded-[3px] bg-linear-to-r from-[#bdbdbd] to-[#a6a6a6] font-['Open_Sans',sans-serif] text-[16px] font-bold text-white">16 nulls</div>
              </div>
            </div>
            <div className={`${card} h-[437px] w-[194px] overflow-hidden`}>
              <div className="h-[35px] pl-[7px] pt-[7px] text-[14.500px] font-light leading-[22px] tracking-[0.2px] text-[#222]">Primary Type</div>
              <div className="bg-white pb-px">
                {LEGEND.map(([c, l]) => (
                  <div key={l} className="flex h-[21px] items-center pl-[3px]">
                    <div className="h-[14px] w-[14px] shrink-0" style={{ backgroundColor: c }} />
                    <span className="ml-[5px] whitespace-nowrap text-[14.500px] font-light text-[#333]">{l}</span>
                  </div>
                ))}
              </div>
            </div>
          </div>
        </div>
      </div>
      <BottomBars />
    </div>
  );
}
